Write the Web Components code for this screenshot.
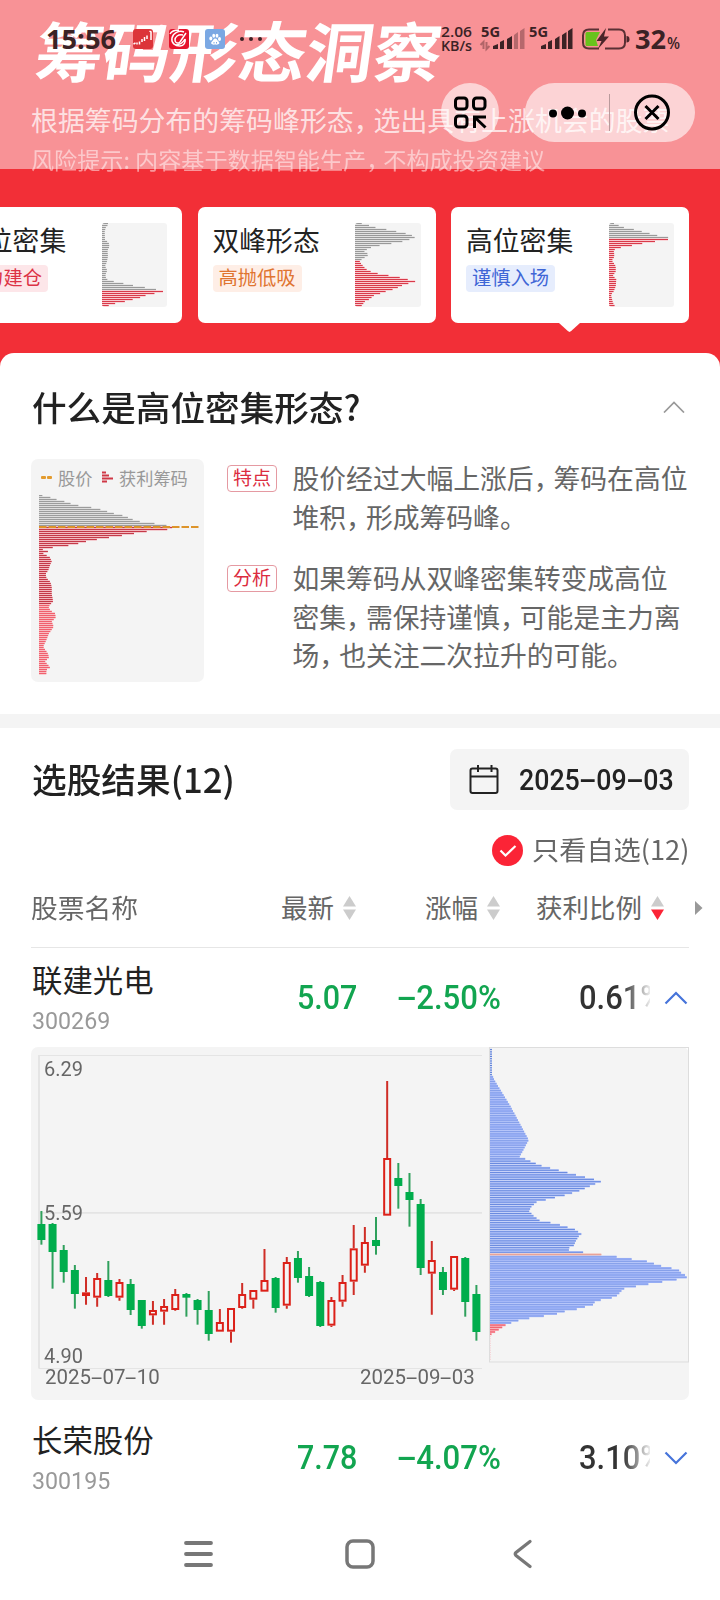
<!DOCTYPE html>
<html lang="zh-CN">
<head>
<meta charset="utf-8">
<title>筹码形态洞察</title>
<style>
html,body{margin:0;padding:0;background:#fff}
body{font-family:"Noto Sans CJK SC",sans-serif;width:720px;height:1600px;overflow:hidden}
</style>
</head>
<body>
<chip-app></chip-app>
<script>
const NUM='font-family:Roboto,"Noto Sans CJK SC",sans-serif;';

// A horizontal bar profile: pts = [y, length] pairs, linearly interpolated
function at(pts,y){
  if(y<=pts[0][0])return pts[0][1];
  for(let i=1;i<pts.length;i++)if(y<=pts[i][0]){
    const[a,b]=pts[i-1],[c,d]=pts[i];return b+(d-b)*(y-a)/(c-a);
  }
  return pts[pts.length-1][1];
}
const pairs=s=>s.trim().split(/\s+/).map(p=>p.split(',').map(Number));
function bars(pts,x,y0,y1,step,k,colour,thick){
  let out='';
  for(let y=y0;y<y1;y+=step){
    const[line,fill]=colour(y),w=(at(pts,y*k)/k).toFixed(1);
    out+=`<rect x="${x}" y="${(y-step/2).toFixed(2)}" width="${w}" height="${step}" fill="${fill}"/><rect x="${x}" y="${(y-thick/2).toFixed(2)}" width="${w}" height="${thick}" fill="${line}"/>`;
  }
  return out;
}

// One line of text; w fits the line to a width, commas take three quarters of an em
class TLine extends HTMLElement{
  connectedCallback(){
    const r=this.attachShadow({mode:'open'}),w=this.getAttribute('w');
    const html=this.textContent.replace(/，/g,'<i>，</i>').replace(/-/g,'<b>-</b>');
    r.innerHTML=`<style>:host{display:block;white-space:nowrap;${w?`width:${w}px;`:''}}
      span{display:inline-block;transform-origin:0 50%}i{font-style:normal;letter-spacing:-.26em}
      b{font-weight:inherit;display:inline-block;transform:scaleX(2);margin:0 .14em}</style><span>${html}</span>`;
    if(w){const s=r.querySelector('span');s.style.transform=`scaleX(${w/s.offsetWidth})`;}
  }
}
customElements.define('t-line',TLine);

const define=(name,render)=>customElements.define(name,class extends HTMLElement{
  connectedCallback(){this.attachShadow({mode:'open'}).innerHTML=render(this);}
});

define('status-bar',()=>`<style>
:host{display:block;height:169px;background:rgba(255,255,255,.48)}
svg{display:block}text{font-family:"Open Sans",sans-serif;fill:#3b2225}
</style><svg width="720" height="169" viewBox="0 0 720 169">
<text x="46" y="48.800" font-size="26.500" font-weight="700" textLength="70" lengthAdjust="spacingAndGlyphs">15:56</text>
<rect x="133" y="29" width="20" height="20" rx="3" fill="#dc3439"/><path d="M133.500 44l2-1m1.500-.5v2m2.500-3v3m2.500-5.500v3m2.500-5v4m2.500-5.500v3.500m2.500-8 1.500 1v8" stroke="#fff" stroke-width="1.500" fill="none"/>
<rect x="169" y="29" width="20" height="20" rx="3" fill="#e5132c"/><path d="M184 32c-5-2-11 1-12 6s3 8 8 8c4 0 6-4 5-7m-2-4c-5-1-8 2-8 5s3 4 5 2l6-9m-16 1c2-4 7-4 9-4m-4 15c5 0 8-2 10-6" fill="none" stroke="#fff" stroke-width="1.500"/>
<rect x="205" y="29" width="20" height="20" rx="3" fill="#7ba8e3"/><g fill="#fff"><ellipse cx="210.800" cy="38.500" rx="1.500" ry="2"/><ellipse cx="213.700" cy="35.800" rx="1.400" ry="2"/><ellipse cx="217" cy="35.800" rx="1.400" ry="2"/><ellipse cx="219.500" cy="39" rx="1.500" ry="2"/><path d="M215.200 38.500c2 0 2 2 3.600 3.300 1.500 1.700 0 3.300-3.600 2.700-3.600.6-5-1-3.500-2.700 1.600-1.300 1.600-3.300 3.500-3.300z"/></g><path d="M214 42v1.500m2.500-1.500v1.500" stroke="#7ba8e3"/>
<g fill="#3b2225"><circle cx="242" cy="39" r="2"/><circle cx="251" cy="39" r="2"/><circle cx="260" cy="39" r="2"/></g>
<text x="441" y="37" font-size="15" font-weight="600" textLength="31" lengthAdjust="spacingAndGlyphs">2.06</text>
<text x="441" y="51" font-size="14.500" font-weight="600" textLength="31" lengthAdjust="spacingAndGlyphs">KB/s</text>
<text x="481" y="37" font-size="14" font-weight="700" textLength="19" lengthAdjust="spacingAndGlyphs">5G</text>
<text x="529" y="37" font-size="14" font-weight="700" textLength="19" lengthAdjust="spacingAndGlyphs">5G</text>
<path d="M483.500 49v-7l-3 3m6-3v7l3-3" fill="none" stroke="#b06468" stroke-width="2"/>
<g fill="#3b2225"><path d="M493 46l5-2v5h-5zM500 42l4-2v9h-4zM507 39l5-3v13h-5z"/><path d="M514 35l4-3v17h-4zM520 31l4.500-3v21H520z" fill="#b5686c"/>
<path d="M541 46l5-2v5h-5zM548 42l4-2v9h-4zM555 39l4.500-3v13H555zM562 35l4.500-3v17H562zM568 31l4.500-3v21H568z"/></g>
<path d="M599 29.500h-10q-6 0-6 6v7q0 6 6 6h10M608 29.500h11q6 0 6 6v7q0 6-6 6h-14" fill="none" stroke="#5a3034" stroke-width="2"/><path d="M587 32h13l-4 8 2 6h-11q-1.500 0-1.500-1.500v-11Q585.500 32 587 32z" fill="#68c21c"/><path d="M606 28l-9.500 13h5L598 49l11-12.500h-5z" fill="#4a2529"/><path d="M626.500 36q3 0 3 3.200t-3 3.200z" fill="#4a2529"/>
<text x="635" y="49" font-size="27" font-weight="700" textLength="31" lengthAdjust="spacingAndGlyphs">32</text>
<text x="667" y="48.500" font-size="16" font-weight="600" textLength="13" lengthAdjust="spacingAndGlyphs">%</text>
</svg>`);

define('capsule-menu',()=>`<style>
:host{display:flex;gap:26px;height:59px}
div{background:rgba(255,255,255,.6);border-radius:30px;height:59px}.c{width:58px}.p{width:170px}svg{display:block}
</style><div class="c"><svg width="58" height="59" fill="none" stroke="#000" stroke-width="3"><rect x="14.500" y="15" width="11.500" height="11" rx="3"/><rect x="32.500" y="15" width="11.500" height="11" rx="3"/><rect x="14.500" y="33" width="11.500" height="11" rx="3"/><path d="M33.500 45V34H45M34 34.500 44.500 44.500"/></svg></div>
<div class="p"><svg width="170" height="59"><circle cx="28" cy="30.500" r="4"/><circle cx="42.500" cy="30" r="6.500"/><circle cx="57" cy="30.500" r="4"/><path d="M84.500 11v37" stroke="#b99a9c"/><g fill="none" stroke="#000" stroke-width="3"><circle cx="127" cy="29.500" r="16.500"/><path d="M120.500 23l13 13m0-13l-13 13"/></g></svg></div>`);

const THUMB={
low:[204,'2,18 8,16 14,11 26,8 50,9 57,17 63,22 75,21 82,16 100,18 118,14 130,9 142,16 155,10 165,12 172,18 180,57 186,84 192,120 198,153 204,189 210,165 216,134 222,120 228,97 234,76 240,45 245,26 251,12'],
twin:[118,'2,20 8,44 15,66 21,103 26,126 31,150 37,170 43,180 48,167 54,150 60,118 66,81 72,51 84,26 95,42 104,28 113,14 118,15 130,25 138,32 145,45 151,65 158,103 163,132 169,156 175,182 180,165 186,144 192,132 198,118 205,93 211,77 218,55 228,45 235,30 250,18'],
high:[51,'2,15 8,30 14,46 20,77 26,100 31,120 36,135 41,167 47,192 53,156 58,120 64,85 70,57 76,20 84,14 95,16 105,14 112,8 120,14 130,20 145,20 158,12 170,22 190,20 205,14 215,6 225,8 240,12 250,18']};
define('shape-card',el=>{
  const[split,p]=THUMB[el.getAttribute('shape')];
  return `<style>
:host{display:flex;justify-content:space-between;box-sizing:border-box;flex:none;width:238px;height:116px;padding:15px 15px 0 15px;background:#fff;border-radius:7px;position:relative}
.t{font-size:26.800px;line-height:36px;color:#222;white-space:nowrap}
.g{display:inline-block;box-sizing:border-box;height:27px;line-height:25px;padding:0 6px;border-radius:4px;font-size:19.300px;margin-top:7px;white-space:nowrap;background:var(--bg);color:var(--fg)}
.m{width:65.500px;height:84px;margin-top:1px;background:#f4f4f4;border-radius:3px;overflow:hidden}
:host([on])::after{content:"";position:absolute;left:108px;top:116px;width:21px;height:9px;background:#fff;clip-path:polygon(0 0,100% 0,58% 88%,50% 100%,42% 88%)}
svg{display:block}</style>
<div><div class="t"><slot></slot></div><div class="g"><slot name="tag"></slot></div></div>
<div class="m"><svg width="66" height="84">${bars(pairs(p),0,.5,84,2,3,y=>y*3<split-4?['#999','#dcdcdc']:['#d83a4a','#fbb9bf'],1)}</svg></div>`});

const BIG='407,10 413,36 419,54 425,78 431,96 437,120 443,160 449,186 455,206 461,226 467,252 473,268 479,282 485,304 491,350 497,385 502,400 508,390 514,326 520,288 526,252 532,213 538,176 544,143 550,120 556,92 562,44 568,10 574,28 580,12 586,22 592,32 604,38 618,32 630,28 642,20 654,22 666,34 680,38 700,38 724,42 740,28 752,34 760,48 772,50 785,38 800,44 820,30 840,22 860,12 880,26 892,30 905,18 922,33 930,22 940,22';
define('shape-figure',()=>`<style>
:host{display:block;width:173px;height:223px;border-radius:7px;background:#f4f4f4;position:relative}
.l{display:flex;align-items:center;height:36px;padding-left:10px;color:#999;font-size:17.200px}
.l svg{flex:none}.a{margin-left:6px}.i{margin-left:10px}.b{margin-left:6px}
.s{display:block}</style>
<div class="l"><svg width="11" height="4"><rect y="1" width="5" height="3" rx="1" fill="#e39b2e"/><rect x="6" y="1" width="5" height="3" rx="1" fill="#e39b2e"/></svg><t-line class="a" w="34">股价</t-line>
<svg class="i" width="11" height="14"><path d="M0 2.500h4M0 5.500h7M0 8.500h11M0 11.500h5" stroke="#cf3846" stroke-width="2"/></svg><t-line class="b" w="69">获利筹码</t-line></div>
<svg class="s" width="173" height="185">${bars(pairs(BIG).map(([a,b])=>[a-405,b]),8,.5,179.5,2,3,y=>y<32.500?['#9c9c9c','#d6d6d6']:y<110?['#c43a49','#f1a4ac']:['#f0606e','#f9a9b0'],1)}<path d="M8 32h160" stroke="#dd942a" stroke-width="2" stroke-dasharray="7.500 2"/></svg>`);

define('red-tag',()=>`<style>:host{display:block;flex:none;box-sizing:border-box;width:50px;height:27px;border:1px solid #e59aa2;border-radius:4px;color:#dc2c40;font-size:19px;line-height:22px;text-align:center}</style><slot></slot>`);

define('info-panel',()=>`<style>
:host{display:block;box-sizing:border-box;height:375px;padding:0 31px;background:#fff;border-radius:14px 14px 0 0;border-bottom:14px solid #f4f4f4}
.h{display:flex;justify-content:space-between;align-items:center;height:106px;font-size:34.500px;font-weight:500;color:#222;padding:0 4px 0 1px}
.h svg{margin-top:2px}
.b{display:flex}.r{padding-left:23px}.k{display:flex;gap:15.500px;color:#666;font-size:26.800px;line-height:38.500px}
.k+.k{margin-top:23px}red-tag{margin-top:6px}</style>
<div class="h"><t-line w="328">什么是高位密集形态?</t-line><svg width="22" height="12" fill="none" stroke="#999" stroke-width="1.700"><path d="M1 11.500 11 1.500l10 10"/></svg></div>
<div class="b"><shape-figure></shape-figure><div class="r">
<div class="k"><red-tag>特点</red-tag><div><t-line>股价经过大幅上涨后，筹码在高位</t-line><t-line>堆积，形成筹码峰。</t-line></div></div>
<div class="k"><red-tag>分析</red-tag><div><t-line>如果筹码从双峰密集转变成高位</t-line><t-line>密集，需保持谨慎，可能是主力离</t-line><t-line>场，也关注二次拉升的可能。</t-line></div></div>
</div></div>`);

define('sort-head',el=>`<style>:host{display:flex;align-items:center;justify-content:flex-end;gap:9px;font-size:26.500px;color:#666}svg{flex:none}div{margin-top:-3px}</style><div><slot></slot></div><svg width="13" height="24"><path d="M0 10.500 6.500 0 13 10.500z" fill="#ccc"/><path d="M0 13.500h13L6.500 24z" fill="${el.hasAttribute('down')?'#fb2436':'#ccc'}"/></svg>`);

define('stock-row',el=>`<style>
:host{display:grid;grid-template-columns:266px 100px 104px 78px 71px 1fr;height:99px;align-items:center}
.n{font-size:30.400px;line-height:40px;color:#222;padding-left:1px}.c{${NUM}font-size:23.800px;line-height:32px;color:#999;padding-left:1px;margin-top:6px}
.v{${NUM}font-size:33.500px;line-height:40px;font-weight:500;color:#12a550}.f{color:#333;overflow:hidden;height:40px;-webkit-mask-image:linear-gradient(90deg,#000 62%,transparent 104%);mask-image:linear-gradient(90deg,#000 62%,transparent 104%)}
svg{margin-left:14px}</style>
<div><t-line class="n" w="122">${el.getAttribute('name')}</t-line><t-line class="c" w="78">${el.getAttribute('code')}</t-line></div>
<t-line class="v" w="60">${el.getAttribute('price')}</t-line><t-line class="v" w="104">${el.getAttribute('change')}</t-line><span></span>
<div class="v f"><t-line w="84">${el.getAttribute('profit')}</t-line></div>
<svg width="24" height="14" fill="none" stroke="#4674da" stroke-width="2.200"><path d="${el.hasAttribute('open')?'M1.500 12.500 12 2l10.500 10.500':'M1.500 1.500 12 12 22.500 1.500'}"/></svg>`);

// direction, high, body top, body bottom, low (thirds of a pixel)
const CANDLES=`g,513,552,600,614 g,549,552,636,746 g,615,630,696,728 g,675,690,762,806 r,711,757,768,794 r,699,714,773,800 g,663,720,768,771 r,717,726,773,782 g,717,732,810,825 g,780,780,858,866 r,783,810,826,854 r,777,798,815,854 r,747,762,810,812 g,759,762,773,830 g,777,780,810,854 g,753,810,882,902 r,807,846,875,875 r,804,804,875,908 r,729,762,804,806 r,750,750,779,806 r,627,720,755,755 g,711,714,804,818 r,651,666,797,806 g,633,654,714,728 g,681,708,768,771 g,723,726,858,861 r,771,780,857,861 r,705,726,785,800 r,555,625,725,765 r,561,606,677,698 g,531,600,618,644 r,123,354,527,527 g,369,414,438,506 g,399,456,480,560 g,477,492,684,705 r,603,660,701,824 g,681,696,750,765 r,648,648,749,753 g,651,654,786,830 g,735,762,876,902`.split(' ');
const VOL='28,6 105,6 108,8 122,14 200,62 300,116 350,89 356,104 376,150 390,203 404,256 424,335 437,303 451,272 465,228 472,198 479,170 486,140 499,125 513,117 527,130 541,148 547,177 554,207 568,254 582,274 588,267 602,258 616,252 623,238 633,236 637,282 643,330 650,377 657,423 664,470 671,492 678,514 685,546 691,567 698,573 705,585 711,594 718,564 725,520 732,477 739,439 745,404 752,395 766,382 773,367 779,336 786,314 793,312 800,287 807,263 814,225 821,202 827,168 834,122 841,87 848,65 855,47 862,37 869,26 876,15 883,4 890,3 960,3';
define('stock-chart',()=>{
  const c=CANDLES.map((s,i)=>{
    const[d,...v]=s.split(','),[h,t,b,l]=v.map(n=>n/3-7),x=10.400+11.154*i;
    return d=='g'?`<path d="M${x} ${h}V${l}" stroke="#2fa05c" stroke-width="2"/><rect x="${x-4}" y="${t}" width="8" height="${b-t}" fill="#00ad4c"/>`
      :`<path d="M${x} ${h}V${t}M${x} ${b}V${l}" stroke="#cf2d26" stroke-width="2"/><rect x="${x-3}" y="${t+1}" width="6" height="${Math.max(b-t-2,1)}" fill="none" stroke="#dc2018" stroke-width="2"/>`;}).join('');
  const pts=pairs(VOL).map(([a,b])=>[a-21,b]);
  const p=bars(pts,459,2.600,313,2.277,3,y=>{const z=y*3+21;return z>639.500&&z<646?['#e9a398','#f3c1b5']:z>886?['#f6d3d6','#f4f4f4']:z>851?['#ef6472','#fb9fa8']:z<106?['#5f82d8','#d5ddf6']:z>352&&z<640?['#6a8be0','#b8c7fa']:['#86a0ea','#a2b6fb'];},1.100);
  return `<style>:host{display:block;position:relative;height:353px;background:#f4f4f4;border-radius:7px}svg{display:block}
t-line{position:absolute;left:13px;${NUM}font-size:21px;line-height:24px;color:#666}</style>
<svg width="658" height="353"><g fill="none" stroke="#e4e4e4"><path d="M7.500 8.500H451M7.500 321.500H451"/><path d="M8 8v313M8 165.800H451" stroke-width="1.800"/><rect x="458.500" y=".5" width="199" height="314.500" stroke="#ddd"/></g>${p}${c}</svg>
<t-line w="39" style="top:10px">6.29</t-line><t-line w="39" style="top:154px">5.59</t-line><t-line w="39" style="top:297px">4.90</t-line>
<t-line w="115" style="top:318px;left:14px">2025-07-10</t-line><t-line w="115" style="top:318px;left:329px">2025-09-03</t-line>`});

define('result-panel',()=>`<style>
:host{display:block;padding:21px 31px 0}
.h{display:flex;justify-content:space-between;align-items:center;height:61px}
.h>t-line{font-size:34.500px;font-weight:500;color:#222;margin:-4px 0 0 1px}
.d{display:flex;align-items:center;box-sizing:border-box;width:239px;height:61px;padding-left:19px;gap:20px;background:#f4f4f4;border-radius:7px;${NUM}font-size:29.500px;font-weight:500;color:#222}
.o{display:flex;justify-content:flex-end;align-items:center;height:80px;gap:9px;font-size:26.500px;color:#666}
.o t-line{margin-top:-3px}
.t{display:grid;grid-template-columns:104px 221px 144px 164px 1fr;align-items:center;height:33px;padding-bottom:24px;font-size:26.500px;color:#666;border-bottom:1px solid #e6e6e6}
.t>t-line{margin-top:-3px}.t>svg{margin-left:31px}
stock-row{height:99px}stock-chart{margin-bottom:8px}</style>
<div class="h"><t-line w="203">选股结果(12)</t-line><div class="d"><svg width="30" height="30" fill="none" stroke="#222" stroke-width="2"><rect x="1.500" y="3.500" width="27" height="24.500" rx="2"/><path d="M1.500 11.500h27M9 0v7M22.500 0v7"/></svg><t-line w="155">2025-09-03</t-line></div></div>
<div class="o"><svg width="31" height="31"><circle cx="15.500" cy="15.500" r="15.500" fill="#fb2436"/><path d="M8.500 15.500l5 5L23.500 11" fill="none" stroke="#fff" stroke-width="2.200"/></svg><t-line w="157">只看自选(12)</t-line></div>
<div class="t"><t-line w="107">股票名称</t-line><sort-head>最新</sort-head><sort-head>涨幅</sort-head><sort-head down>获利比例</sort-head><svg width="8" height="14"><path d="M0 0v14l7.500-7z" fill="#999"/></svg></div>
<stock-row name="联建光电" code="300269" price="5.07" change="-2.50%" profit="0.61%" open></stock-row>
<stock-chart></stock-chart>
<stock-row name="长荣股份" code="300195" price="7.78" change="-4.07%" profit="3.10%"></stock-row>`);

define('nav-bar',()=>`<style>:host{display:flex;justify-content:space-between;align-items:center;box-sizing:border-box;height:94px;padding:0 188px 0 184px}svg{display:block}.q{margin-right:6px}</style>
<svg width="29" height="30" stroke="#777" stroke-width="3.800" stroke-linecap="round"><path d="M2 4h25M2 15h25M2 26h25"/></svg>
<svg class="q" width="30" height="30" fill="none" stroke="#777" stroke-width="3.500"><rect x="2" y="2" width="26" height="26" rx="6"/></svg>
<svg width="20" height="30" fill="none" stroke="#777" stroke-width="3.200" stroke-linecap="round"><path d="M18 2.500 4 13.500q-1.500 1.500 0 3L18 27.500"/></svg>`);

define('page-hero',()=>`<style>
:host{display:block;position:relative;height:367px;background:#f22f37;overflow:hidden}
.t{padding:3px 0 3px 35px;height:92px;line-height:92px;color:#fff;font-size:65px;font-weight:700;transform:skewX(-8deg);transform-origin:0 60%}
.s{padding-left:31px;font-size:26.900px;line-height:40px;margin-top:2px;color:rgba(255,255,255,.74)}
.r{padding-left:31px;font-size:22.900px;line-height:34px;margin-top:2px;color:rgba(255,255,255,.5)}
.c{display:flex;gap:15.500px;margin:31px 0 0 -56px}
status-bar{position:absolute;inset:0 0 auto 0}capsule-menu{position:absolute;left:441px;top:82.500px}
</style>
<div class="t"><t-line w="406">筹码形态洞察</t-line></div>
<div class="s"><t-line>根据筹码分布的筹码峰形态，选出具有上涨机会的股票</t-line></div>
<div class="r"><t-line w="514">风险提示: 内容基于数据智能生产，不构成投资建议</t-line></div>
<div class="c"><shape-card shape="low" style="--bg:#fde6e9;--fg:#dc3245">低位密集<span slot="tag">主力建仓</span></shape-card>
<shape-card shape="twin" style="--bg:#feeee6;--fg:#e07430">双峰形态<span slot="tag">高抛低吸</span></shape-card>
<shape-card shape="high" on style="--bg:#e6edfd;--fg:#3f66d6">高位密集<span slot="tag">谨慎入场</span></shape-card></div>
<status-bar></status-bar><capsule-menu></capsule-menu>`);

define('chip-app',()=>`<style>:host{display:flex;flex-direction:column;width:720px;height:1600px;overflow:hidden;background:#fff}info-panel{margin-top:-14px;position:relative;flex:none}page-hero{flex:none}result-panel{flex:1}</style>
<page-hero></page-hero><info-panel></info-panel><result-panel></result-panel><nav-bar></nav-bar>`);
</script>
</body>
</html>
